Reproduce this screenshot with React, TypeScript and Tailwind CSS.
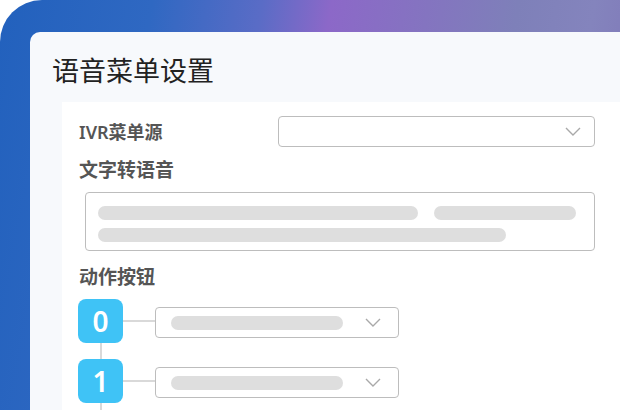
const font = { fontFamily: '"Noto Sans", "Noto Sans CJK SC", sans-serif' };

function Chevron() {
  return (
    <svg width="16" height="9" viewBox="0 0 16 9" className="shrink-0">
      <path d="M1 1 L8 8 L15 1" fill="none" stroke="#a9a9a9" strokeWidth="1.4" />
    </svg>
  );
}

function Bar({ w }: { w: string }) {
  return <div className={`h-[14px] rounded-full bg-[#dedede] ${w}`} />;
}

function ActionRow({ n, last }: { n: string; last?: boolean }) {
  return (
    <div className="flex items-start">
      <div className="flex flex-col items-center w-[45px]">
        <div className="w-[45px] h-[44px] rounded-[8px] bg-[#3fc3f6] flex items-center justify-center text-white text-[28px] font-semibold leading-none">
          {n}
        </div>
        <div className={`w-[2px] bg-[#d9d9d9] ${last ? "h-[20px]" : "h-[16px]"}`} />
      </div>
      <div className="mt-[21px] w-[32px] h-[2px] bg-[#d9d9d9]" />
      <div className="mt-[8px] w-[244px] h-[31px] rounded-[4px] border border-[#bdbdbd] bg-white flex items-center justify-between pl-[15px] pr-[17px]">
        <div className="h-[14px] w-[172px] rounded-full bg-[#dedede]" />
        <Chevron />
      </div>
    </div>
  );
}

export default function App() {
  return (
    <div className="w-[620px] h-[410px] bg-white overflow-hidden" style={font}>
      <div className="w-full h-full rounded-tl-[42px] overflow-hidden bg-[linear-gradient(100deg,#2261bd_0%,#2f68c2_22%,#5a6cc6_38%,#8c68c8_48%,#8474c0_62%,#7e80b9_75%,#8484bd_86%,#7d72b6_100%)] pt-[32px] pl-[30px]">
        <div className="h-full rounded-tl-[10px] bg-[#f7f9fc]">
          <h1 className="pl-[22px] pt-[22px] h-[70px] text-[27px] leading-[34px] text-[#222222] font-normal">
            语音菜单设置
          </h1>
          <div className="ml-[32px] h-full bg-white pl-[17px] pt-[14px]">
            <div className="flex items-center">
              <div className="w-[199px] text-[18px] font-semibold text-[#555555] leading-none">IVR菜单源</div>
              <div className="w-[317px] h-[31px] rounded-[4px] border border-[#bdbdbd] flex items-center justify-end pr-[13px]">
                <Chevron />
              </div>
            </div>
            <div className="mt-[10px] text-[19px] font-semibold text-[#555555] leading-[26px]">文字转语音</div>
            <div className="mt-[9px] ml-[6px] w-[510px] h-[59px] rounded-[4px] border border-[#bdbdbd] px-[12px] pt-[13px] flex flex-col gap-[8px]">
              <div className="flex gap-[16px]">
                <Bar w="w-[320px]" />
                <Bar w="w-[142px]" />
              </div>
              <Bar w="w-[408px]" />
            </div>
            <div className="mt-[13px] text-[19px] font-semibold text-[#555555] leading-[26px]">动作按钮</div>
            <div className="mt-[9px] -ml-[1px] flex flex-col">
              <ActionRow n="0" />
              <ActionRow n="1" last />
            </div>
          </div>
        </div>
      </div>
    </div>
  );
}
